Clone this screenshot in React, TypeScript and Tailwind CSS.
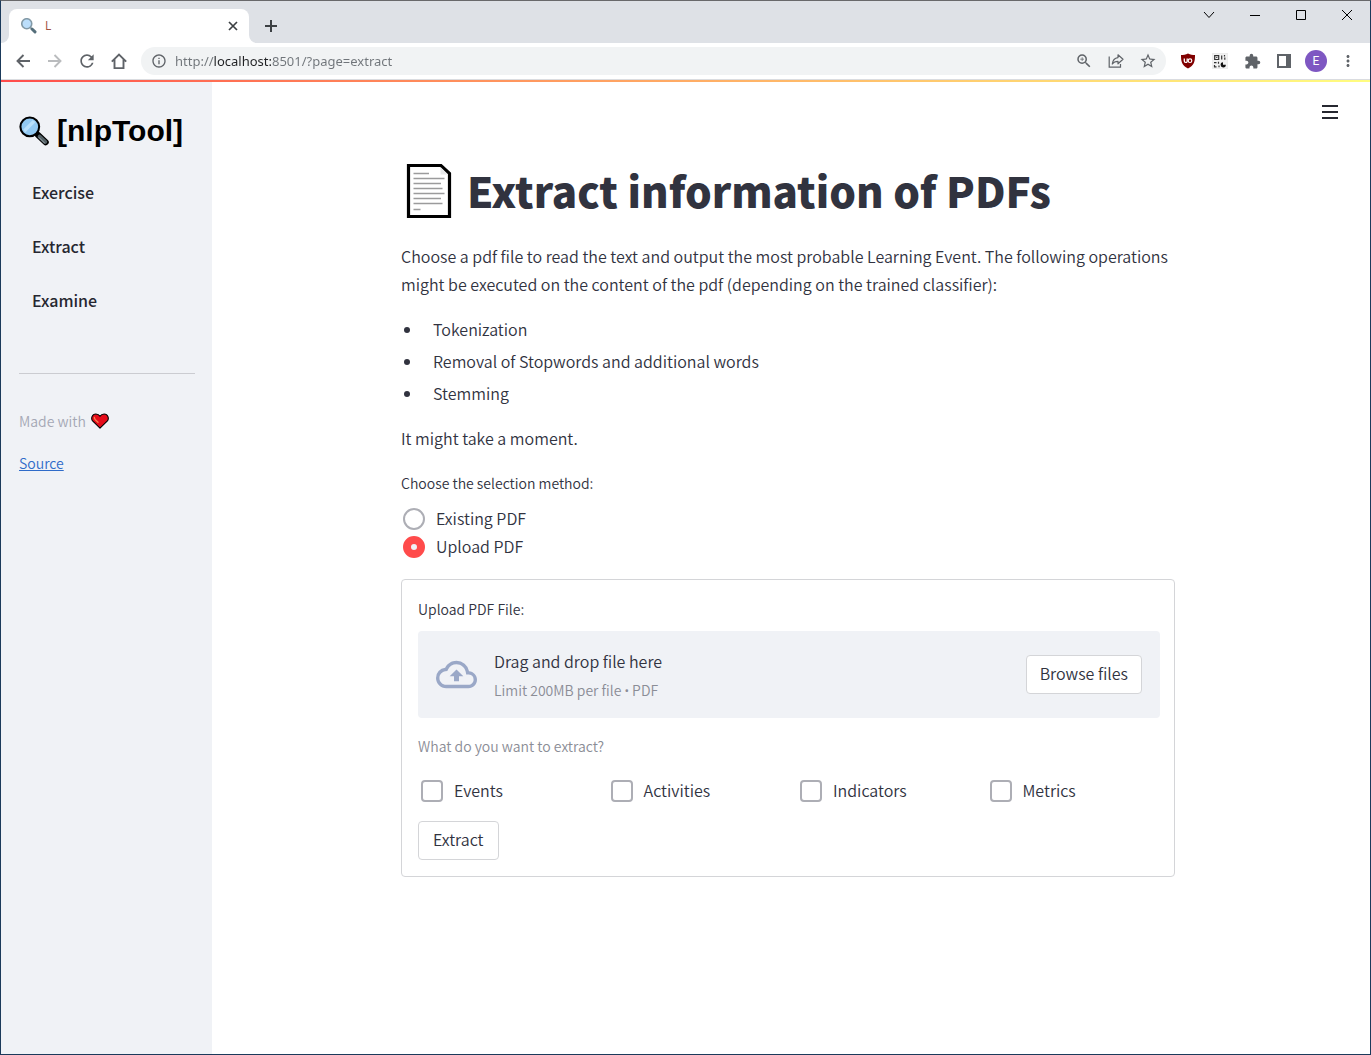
import React, { useState } from 'react';
import { MdRefresh, MdInfoOutline, MdStarBorder, MdExtension, MdMoreVert, MdZoomIn } from 'react-icons/md';

function Magnifier({ className, outline }: { className: string; outline?: boolean }) {
  return (
    <svg viewBox="0 0 32 32" className={className} aria-hidden="true">
      {outline && <path d="M20 20l8.500 8" stroke="#000" strokeWidth="6.500" strokeLinecap="round" />}
      <path d="M18 18l4 4" stroke={outline ? '#000' : '#8a9ba6'} strokeWidth="3" />
      <path d="M22 22l6 5.700" stroke={outline ? '#546166' : '#546e7a'} strokeWidth={outline ? 4.200 : 6} strokeLinecap="round" />
      {outline && <path d="M21.500 23l5.500 5.500" stroke="#9aa5a9" strokeWidth="1" strokeLinecap="round" />}
      <circle cx="11.500" cy="11.500" r="10" fill={outline ? '#92c9f2' : '#bbdefb'} stroke={outline ? '#000' : '#8299a6'} strokeWidth={outline ? 2.200 : 3.200} />
      {outline && <path d="M4.500 14.500L14.500 4.600l3.200 1.800L6.600 17.600z" fill="#b9e0fb" />}
    </svg>
  );
}

function PageIcon() {
  return (
    <svg viewBox="0 0 46 56" className="h-14 w-[46px] shrink-0" aria-hidden="true">
      <path d="M2.500 2.500H35l8.500 8V53.500h-41z" fill="#fff" stroke="#000" strokeWidth="3.200" />
      <path d="M34.500 4v7.500H42z" fill="#e6e7e8" />
      <path
        d="M7.500 10.500H23M7.500 15.500h31M7.500 20.500H35M7.500 25.500h29M7.500 30.500h31M7.500 35.500H35M7.500 40.500h29M7.500 46.500h7"
        stroke="#9b9b9c"
        strokeWidth="1.400"
      />
    </svg>
  );
}

function Heart() {
  return (
    <svg viewBox="0 0 18 16" className="h-4 w-[18px]" aria-hidden="true">
      <path
        d="M9 15.200L1.600 7.900C-.2 5.700.8 1 4.900 1 7 1 8.300 2.200 9 3.300 9.700 2.200 11 1 13.100 1c4.100 0 5.100 4.700 3.300 6.900z"
        fill="#e50b19"
        stroke="#000"
        strokeWidth="1.100"
        strokeLinejoin="round"
      />
      <path d="M3.400 4.300c-.3 1.800 1.500 3 3.600 5" fill="none" stroke="#f5834f" strokeWidth="1.300" strokeLinecap="round" />
    </svg>
  );
}

function IconButton({ label, children }: { label: string; children: React.ReactNode }) {
  return (
    <button type="button" aria-label={label} className="flex h-7 w-8 shrink-0 items-center justify-center text-[#5f6368]">
      {children}
    </button>
  );
}

function TabStrip() {
  return (
    <div className="flex h-[42px] items-start bg-[#dee1e6]">
      <div className="flex h-full items-end">
        <div className="h-2 w-2 bg-white">
          <div className="h-full w-full rounded-br-lg bg-[#dee1e6]" />
        </div>
        <div className="flex h-[34px] w-60 items-center rounded-t-lg bg-white pr-2 pl-3">
          <Magnifier className="size-4" />
          <span className="ml-2 flex-1 font-['Open_Sans',sans-serif] text-xs text-[#a0503f]">L</span>
          <button type="button" aria-label="Close tab" className="flex size-4 items-center justify-center">
            <svg viewBox="0 0 10 10" className="size-[10px]">
              <path d="M1 1l8 8M9 1L1 9" stroke="#3c4043" strokeWidth="1.700" />
            </svg>
          </button>
        </div>
        <div className="h-2 w-2 bg-white">
          <div className="h-full w-full rounded-bl-lg bg-[#dee1e6]" />
        </div>
        <button type="button" aria-label="New tab" className="flex h-[34px] w-7 items-center justify-center">
          <svg viewBox="0 0 12 12" className="size-3">
            <path d="M6 0v12M0 6h12" stroke="#3c4043" strokeWidth="2" />
          </svg>
        </button>
      </div>
      <div className="ml-auto flex text-black">
        <button type="button" aria-label="Search tabs" className="flex h-7 w-[46px] items-center justify-center">
          <svg viewBox="0 0 12 8" className="h-2 w-3">
            <path d="M1 1l5 5.500L11 1" fill="none" stroke="currentColor" />
          </svg>
        </button>
        <button type="button" aria-label="Minimize" className="flex h-7 w-[46px] items-center justify-center">
          <svg viewBox="0 0 10 10" className="size-[10px]">
            <path d="M0 5.500h10" stroke="currentColor" />
          </svg>
        </button>
        <button type="button" aria-label="Maximize" className="flex h-7 w-[46px] items-center justify-center">
          <svg viewBox="0 0 10 10" className="size-[10px]">
            <path d="M.5.5h9v9h-9z" fill="none" stroke="currentColor" />
          </svg>
        </button>
        <button type="button" aria-label="Close" className="flex h-7 w-[46px] items-center justify-center">
          <svg viewBox="0 0 10 10" className="size-[10px]">
            <path d="M0 0l10 10M10 0L0 10" stroke="currentColor" />
          </svg>
        </button>
      </div>
    </div>
  );
}

function Toolbar() {
  return (
    <div className="flex h-[37px] items-center border-b border-[#dadce0] bg-white px-[6px]">
      <IconButton label="Back">
        <svg viewBox="0 0 14 14" className="size-[14px]">
          <path d="M14 7H1.500M7.500 1L1.500 7l6 6" fill="none" stroke="currentColor" strokeWidth="1.900" />
        </svg>
      </IconButton>
      <IconButton label="Forward">
        <svg viewBox="0 0 14 14" className="size-[14px] text-[#babcbe]">
          <path d="M0 7h12.500M6.500 1l6 6-6 6" fill="none" stroke="currentColor" strokeWidth="1.900" />
        </svg>
      </IconButton>
      <IconButton label="Reload">
        <MdRefresh size={20} />
      </IconButton>
      <IconButton label="Home">
        <svg viewBox="0 0 16 16" className="size-4">
          <path d="M.8 8.600L8 1.500l7.200 7.100M3.500 6.500v8.600h9V6.500" fill="none" stroke="currentColor" strokeWidth="1.900" />
        </svg>
      </IconButton>
      <div className="ml-[6px] flex h-7 flex-1 items-center rounded-full bg-[#f1f3f4] px-[2px]">
        <IconButton label="View site information">
          <MdInfoOutline size={16} />
        </IconButton>
        <input
          type="text"
          aria-label="Address"
          defaultValue="http://localhost:8501/?page=extract"
          className="min-w-0 flex-1 bg-[linear-gradient(90deg,#70757a_39px,#202124_39px,#202124_96px,#70757a_96px)] bg-clip-text pt-px font-['Noto_Sans',sans-serif] text-[13px] text-transparent caret-black outline-none"
        />
        <IconButton label="Zoom">
          <MdZoomIn size={18} />
        </IconButton>
        <IconButton label="Share">
          <svg viewBox="0 0 16 16" className="size-4">
            <path d="M1.200 3.500v10.700h11.300v-3.200" fill="none" stroke="currentColor" strokeWidth="1.200" />
            <path d="M10 1.800l5 4.500-5 4.500V8.300c-3 0-4.500.9-5.700 2.700.4-3.300 2.200-5.900 5.700-6.400z" fill="none" stroke="currentColor" strokeWidth="1.200" strokeLinejoin="round" />
          </svg>
        </IconButton>
        <IconButton label="Bookmark this page">
          <MdStarBorder size={18} />
        </IconButton>
      </div>
      <div className="ml-[6px] flex items-center">
        <IconButton label="uBlock Origin">
          <svg viewBox="0 0 16 16" className="size-4">
            <path d="M8 .4c2.300 1.400 4.600 1.700 7 1.700 0 6.400-.7 10.500-7 13.500C1.700 12.600 1 8.500 1 2.100c2.400 0 4.700-.3 7-1.700z" fill="#800000" />
            <path d="M4.300 5.600v2.300c0 2 2.900 2 2.900.4V5.600" fill="none" stroke="#fff" strokeWidth="1.300" />
            <circle cx="10" cy="7.700" r="1.800" fill="none" stroke="#fff" strokeWidth="1.200" />
          </svg>
        </IconButton>
        <IconButton label="QR code">
          <svg viewBox="0 0 16 16" className="size-4">
            <rect width="16" height="16" rx="1.500" fill="#f1f1f1" stroke="#ddd" strokeWidth=".5" />
            <path d="M2.700 2.700h4v3.800h-4zM9.700 2.500v4M12.500 2v1.500M12.800 4.500v2.200M2 9.700h2.500M6.500 8.800v2M2.500 12v1.800h2M7 12.500v1.800" fill="none" stroke="#333" strokeWidth="1.200" />
            <path d="M4.300 4.100h1v1h-1z" fill="#222" />
            <path d="M11 9.300v2.500h2.800a2.600 2.600 0 11-2.800-2.500z" fill="#111" />
          </svg>
        </IconButton>
        <IconButton label="Extensions">
          <MdExtension size={17} />
        </IconButton>
        <IconButton label="Side panel">
          <svg viewBox="0 0 14 14" className="size-[14px]">
            <path d="M1 1h12v12H1z" fill="none" stroke="currentColor" strokeWidth="2" />
            <path d="M9 1h4v12H9z" fill="currentColor" />
          </svg>
        </IconButton>
        <IconButton label="Profile">
          <span className="flex size-[22px] items-center justify-center rounded-full bg-[#7e57c2] font-['Roboto',sans-serif] text-xs text-white">E</span>
        </IconButton>
        <IconButton label="Menu">
          <MdMoreVert size={18} />
        </IconButton>
      </div>
    </div>
  );
}

const navItems = ['Exercise', 'Extract', 'Examine'];

function Sidebar() {
  return (
    <aside className="w-[211px] shrink-0 bg-[#f0f2f6] pt-8 pr-[17px] pl-[18px]">
      <div className="flex h-[34px] items-center">
        <Magnifier className="size-[30px]" outline />
        <span className="ml-2 font-['Liberation_Sans',sans-serif] text-[30px] leading-[34px] font-bold text-black">[nlpTool]</span>
      </div>
      <nav className="mt-[17px] flex flex-col pl-[13px]">
        {navItems.map((item) => (
          <a key={item} href={`#${item.toLowerCase()}`} className="h-[54px] text-base leading-[54px] font-medium text-[#262730]">
            {item}
          </a>
        ))}
      </nav>
      <hr className="mt-[46px] border-[#cbccd1]" />
      <p className="mt-[35px] flex h-6 items-center text-sm leading-6 font-[350] text-[#a5a8b5]">
        Made with
        <span className="ml-[5px]">
          <Heart />
        </span>
      </p>
      <p className="mt-[18px] text-sm leading-6 font-[350]">
        <a href="#source" className="text-[#2f6bc9] underline">
          Source
        </a>
      </p>
    </aside>
  );
}

const operations = ['Tokenization', 'Removal of Stopwords and additional words', 'Stemming'];
const methods = ['Existing PDF', 'Upload PDF'];
const targets = ['Events', 'Activities', 'Indicators', 'Metrics'];

function ExtractForm() {
  return (
    <form className="mt-[18px] rounded border border-[#d4d5d8] pt-[17px] pr-[14px] pb-4 pl-4" onSubmit={(e) => e.preventDefault()}>
      <label htmlFor="pdf" className="block text-sm leading-6">
        Upload PDF File:
      </label>
      <input id="pdf" type="file" accept=".pdf" className="sr-only" />
      <div className="mt-[10px] flex items-center rounded bg-[#f0f2f6] px-[18px] py-4">
        <svg viewBox="0 0 24 24" className="size-[41px] shrink-0 fill-[#9aa8c7]" aria-hidden="true">
          <path d="M19.350 10.040A7.490 7.490 0 0012 4C9.110 4 6.600 5.640 5.350 8.040A5.994 5.994 0 000 14c0 3.310 2.690 6 6 6h13c2.760 0 5-2.240 5-5 0-2.640-2.050-4.780-4.650-4.960zM19 18H6c-2.210 0-4-1.790-4-4 0-2.050 1.530-3.760 3.560-3.970l1.070-.11.500-.95A5.469 5.469 0 0112 6c2.620 0 4.880 1.860 5.390 4.430l.3 1.500 1.530.11A2.980 2.980 0 0122 15c0 1.650-1.350 3-3 3zM8 13h2.550v3h2.900v-3H16l-4-4z" />
        </svg>
        <div className="ml-[17px] flex-1">
          <div className="text-base leading-7">Drag and drop file here</div>
          <div className="mt-[3px] text-sm leading-6 text-[#8b8d96]">
            Limit 200MB per file <span className="font-['Roboto',sans-serif] leading-4">•</span> PDF
          </div>
        </div>
        <button type="button" className="h-[39px] rounded border border-[#d4d5d8] bg-white px-[13px] pb-1 text-base leading-7 font-[350]">
          Browse files
        </button>
      </div>
      <p className="mt-4 text-sm leading-6 text-[#8b8d96]">What do you want to extract?</p>
      <div className="mt-5 grid grid-cols-4 gap-4">
        {targets.map((t) => (
          <label key={t} className="flex items-center pl-[3px] text-base leading-7">
            <input type="checkbox" className="mr-[11px] size-[22px] appearance-none rounded border-2 border-[#adaeb5] bg-white checked:border-[#ff4b4b] checked:bg-[#ff4b4b]" />
            <span className="-mt-0.5">{t}</span>
          </label>
        ))}
      </div>
      <button type="submit" className="mt-[17px] block h-[39px] rounded border border-[#d4d5d8] bg-white px-[14px] pb-1 text-base leading-7 font-[350]">
        Extract
      </button>
    </form>
  );
}

function Main() {
  const [method, setMethod] = useState('Upload PDF');
  return (
    <main className="relative flex-1 pr-[6px] pb-20">
      <button type="button" aria-label="Main menu" className="absolute top-[18px] right-8 flex h-6 w-4 flex-col justify-center gap-1">
        <span className="h-[2px] w-4 bg-[#262730]" />
        <span className="h-[2px] w-4 bg-[#262730]" />
        <span className="h-[2px] w-4 bg-[#262730]" />
      </button>
      <div className="mx-auto max-w-[810px] px-[18px] pt-[81px] text-base leading-7 font-[350]">
        <h1 className="flex h-14 items-center pl-[5px] text-[42px] leading-[56px] font-black whitespace-nowrap text-[#31333f]">
          <PageIcon />
          <span className="-mt-0.5 ml-[15px]">Extract information of PDFs</span>
        </h1>
        <p className="mt-[23px]">
          Choose a pdf file to read the text and output the most probable Learning Event. The following operations might be executed on the content of the pdf
          (depending on the trained classifier):
        </p>
        <ul className="mt-[17px] flex flex-col gap-1">
          {operations.map((op) => (
            <li key={op} className="flex items-center">
              <span className="mt-0.5 mr-[23px] ml-[3px] size-[6px] rounded-full bg-[#31333f]" />
              {op}
            </li>
          ))}
        </ul>
        <p className="mt-[17px]">It might take a moment.</p>
        <fieldset className="mt-[19px]">
          <legend className="mb-[10px] text-sm leading-6">Choose the selection method:</legend>
          {methods.map((m) => (
            <label key={m} className="flex h-7 items-center pl-[2px]">
              <input
                type="radio"
                name="method"
                checked={method === m}
                onChange={() => setMethod(m)}
                className="mr-[11px] size-[22px] appearance-none rounded-full border-2 border-[#adaeb5] bg-white checked:border-8 checked:border-[#ff4b4b] checked:bg-[#f0f2f6]"
              />
              <span className="-mt-0.5">{m}</span>
            </label>
          ))}
        </fieldset>
        <ExtractForm />
      </div>
    </main>
  );
}

export default function App() {
  return (
    <div className="flex min-h-screen flex-col border border-t-[#69696b] border-r-[#1b3a5b] border-b-[#1b3a5b] border-l-[#1b3a5b] bg-white font-['Noto_Sans_CJK_SC',sans-serif] text-[#31333f]">
      <TabStrip />
      <Toolbar />
      <div className="h-[2px] bg-gradient-to-r from-[#ff4b4b] to-[#fffd80]" />
      <div className="flex flex-1">
        <Sidebar />
        <Main />
      </div>
    </div>
  );
}
